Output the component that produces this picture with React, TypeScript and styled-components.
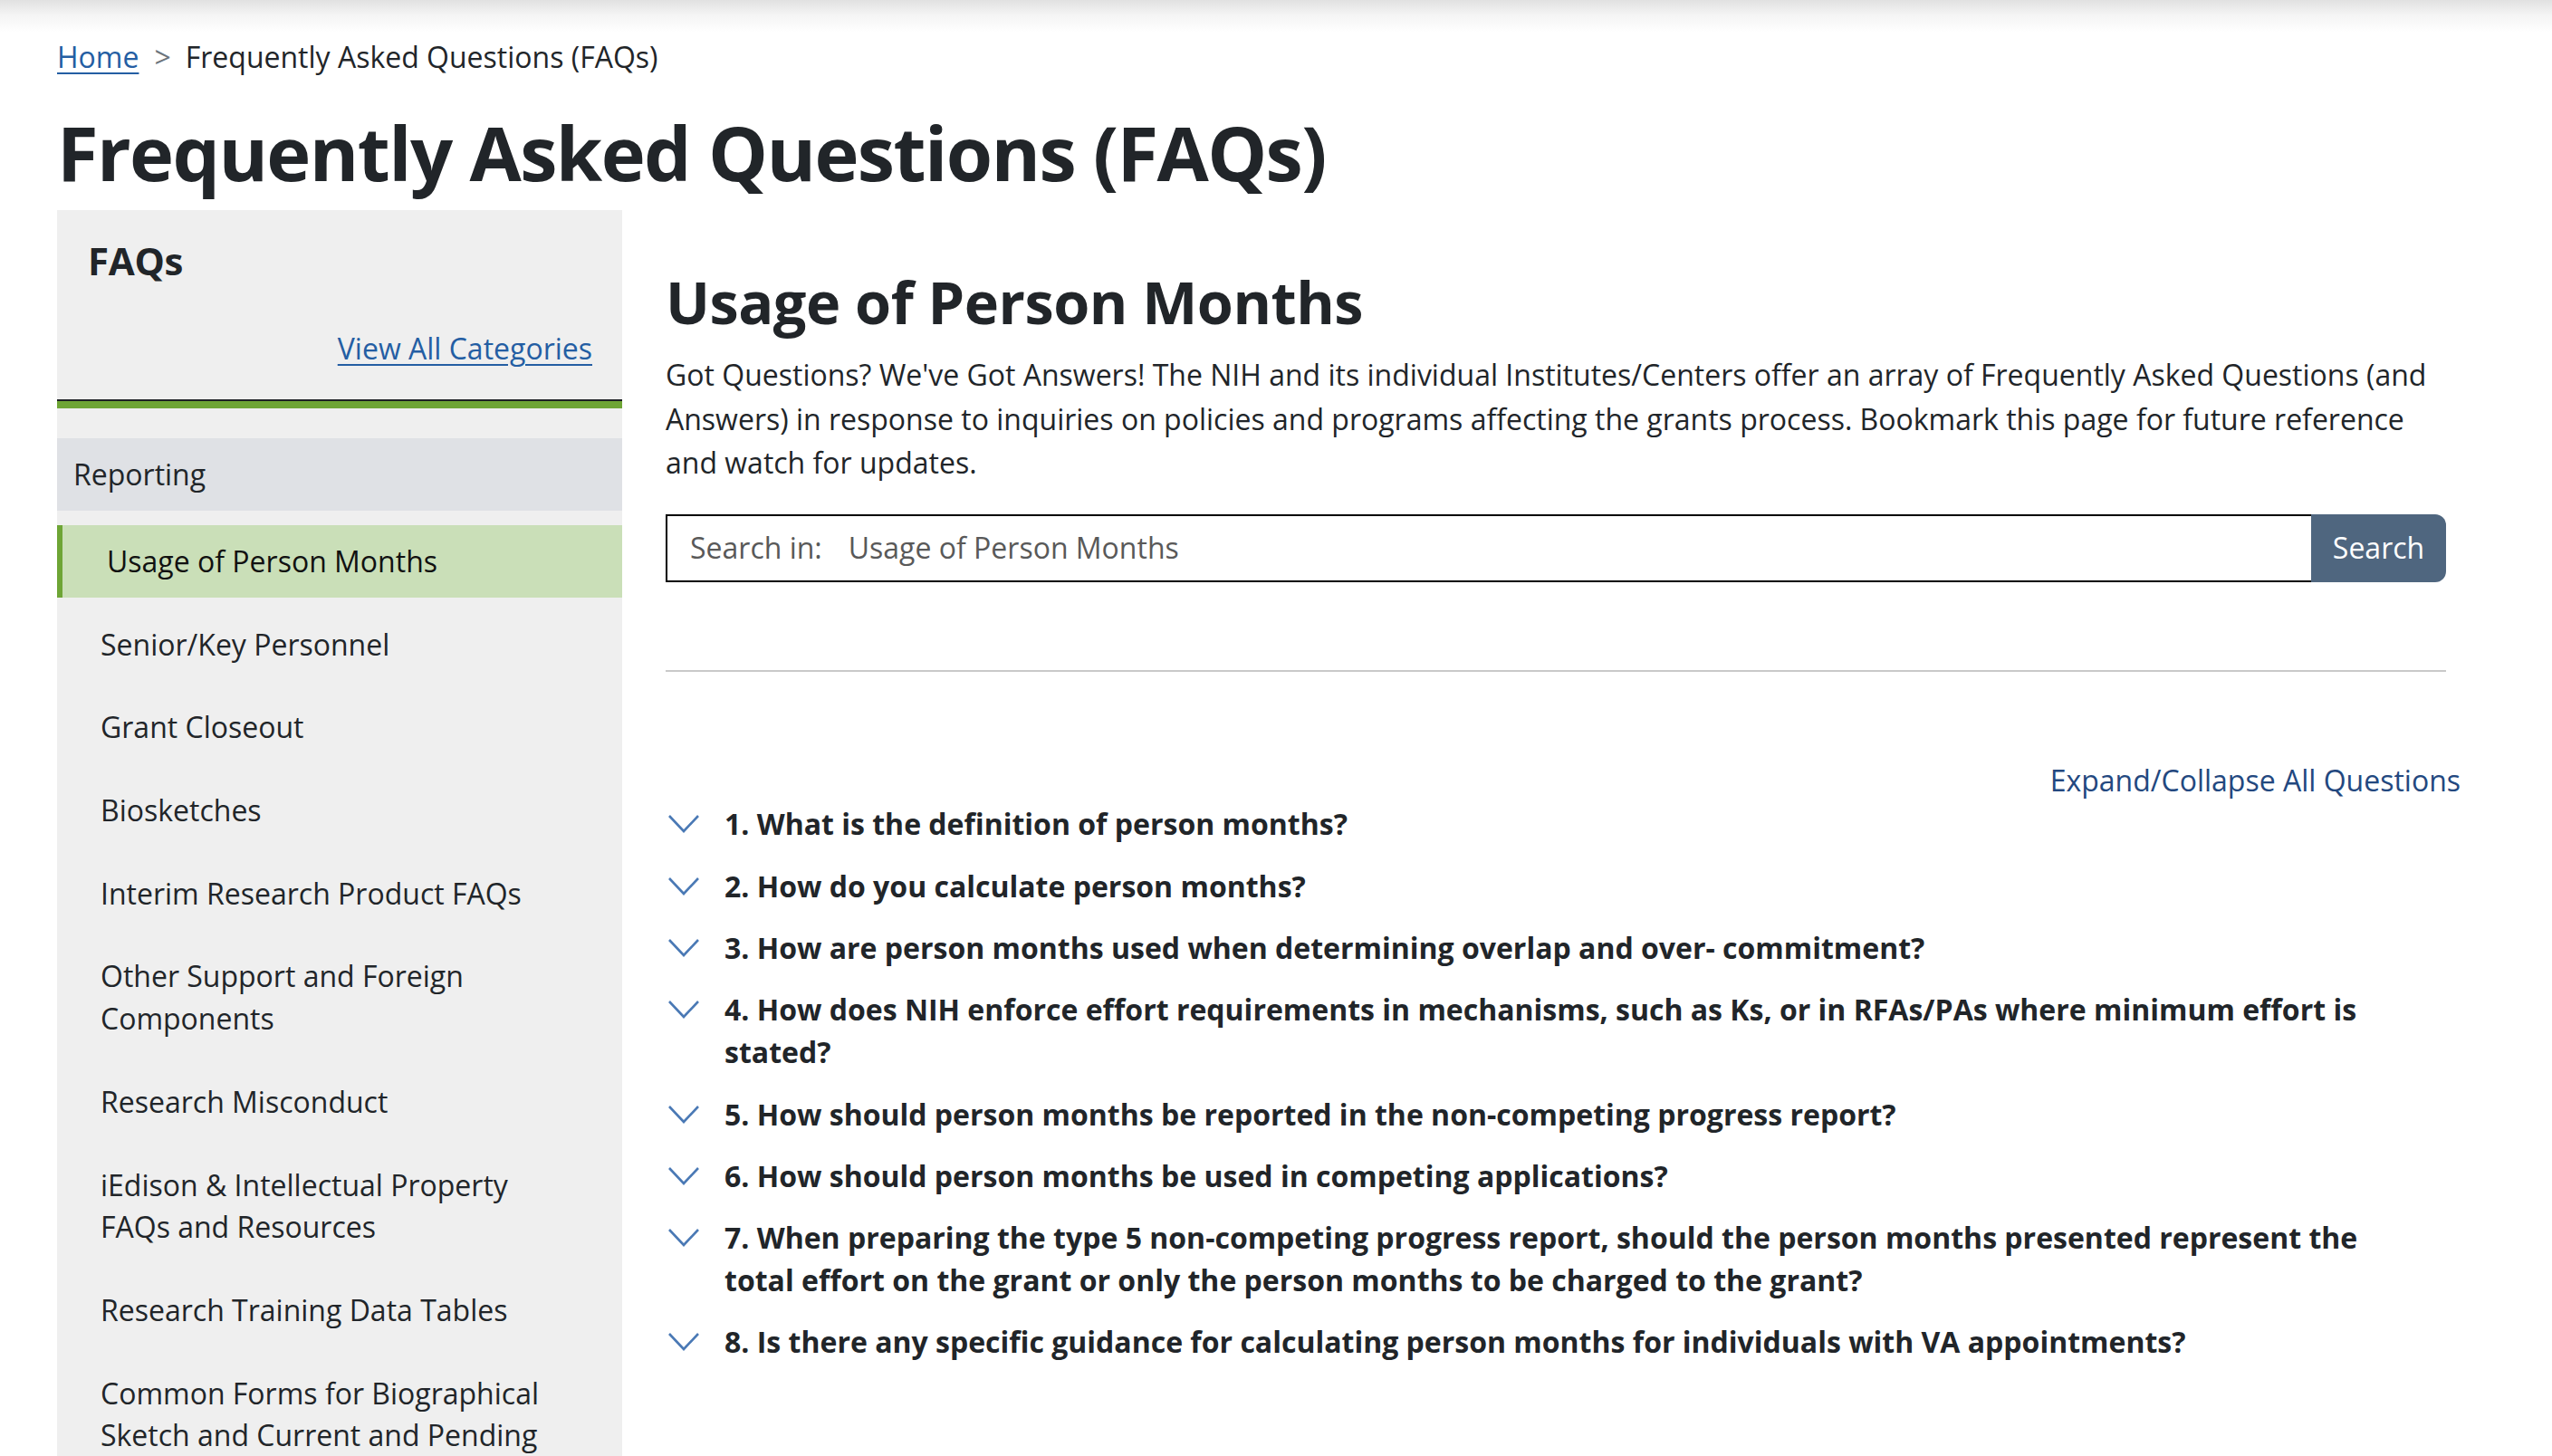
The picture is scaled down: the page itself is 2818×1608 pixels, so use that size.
import React from "react";
import styled, { createGlobalStyle } from "styled-components";

const GlobalStyle = createGlobalStyle`
  html, body {
    margin: 0;
    padding: 0;
    background: #ffffff;
  }
  body {
    font-family: "Open Sans", "Noto Sans", "DejaVu Sans", sans-serif;
    font-size: 32px;
    line-height: 1.5;
    color: #212529;
  }
  * { box-sizing: border-box; }
`;

const TopShade = styled.div`
  height: 36px;
  background: linear-gradient(to bottom, #e1e1e1 0%, #f4f4f4 45%, #ffffff 100%);
`;

const Page = styled.div`
  padding: 3px 0 0 63px;
  width: 2818px;
`;

const Breadcrumb = styled.nav`
  display: flex;
  align-items: baseline;
  line-height: 48.6px;
`;

const Link = styled.a`
  color: #245ea3;
  text-decoration: underline;
  text-decoration-thickness: 2px;
  text-underline-offset: 5px;
  cursor: pointer;
`;

const Sep = styled.span`
  color: #6c757d;
  margin: 0 16px 0 17px;
`;

const Title = styled.h1`
  margin: 30px 0 15px;
  font-size: 83px;
  line-height: 1.2;
  font-weight: 700;
  color: #212529;
  letter-spacing: -1.6px;
`;

const Layout = styled.div`
  display: grid;
  grid-template-columns: 624px 1966px;
  column-gap: 48px;
  align-items: start;
`;

const Sidebar = styled.aside`
  background: #efefef;
  padding-bottom: 40px;
`;

const SideHeader = styled.div`
  padding: 31px 33px 32px 34px;
  border-bottom: 2px solid #1d2125;
  display: flex;
  flex-direction: column;
`;

const SideTitle = styled.h3`
  margin: 0;
  font-size: 42px;
  line-height: 1.2;
  font-weight: 700;
  letter-spacing: -0.3px;
`;

const SideLink = styled(Link)`
  align-self: flex-end;
  margin-top: 47px;
  line-height: 48.6px;
`;

const SideNav = styled.ul`
  list-style: none;
  margin: 0;
  padding: 33px 0 0;
  border-top: 8px solid #6ea535;
`;

const GroupItem = styled.li`
  background: #dfe1e5;
  padding: 15.7px 18px;
  line-height: 48.6px;
  margin-bottom: 16px;
  color: #212529;
`;

const NavItem = styled.li<{ $active?: boolean }>`
  padding: ${(p) => (p.$active ? "16.7px 24px 16.7px 49px" : "22.5px 70px 22.5px 48px")};
  line-height: ${(p) => (p.$active ? "46.6px" : "46.7px")};
  background: ${(p) => (p.$active ? "#cadfb8" : "transparent")};
  border-left: ${(p) => (p.$active ? "6px solid #6ea535" : "none")};
  margin-bottom: ${(p) => (p.$active ? "6px" : "0")};
  color: ${(p) => (p.$active ? "#111" : "#212529")};
`;

const Main = styled.main`
  padding-top: 63px;
`;

const Heading = styled.h2`
  margin: 0 0 17px;
  font-size: 64.8px;
  line-height: 1.2;
  font-weight: 700;
  letter-spacing: -0.5px;
`;

const Intro = styled.p`
  margin: 0 0 32px;
  line-height: 48.6px;
`;

const SearchRow = styled.form`
  display: flex;
  height: 75px;
`;

const SearchField = styled.label`
  flex: 1;
  display: flex;
  align-items: center;
  border: 2px solid #000;
  border-right: none;
  padding-left: 25px;
  color: #595959;
`;

const SearchLabel = styled.span`
  margin-right: 29px;
  white-space: nowrap;
`;

const SearchInput = styled.input`
  flex: 1;
  border: none;
  outline: none;
  background: transparent;
  font: inherit;
  color: #212529;
  padding: 0;
  &::placeholder {
    color: #595959;
    opacity: 1;
  }
`;

const SearchButton = styled.button`
  width: 149px;
  border: none;
  background: #4f667f;
  color: #fff;
  font: inherit;
  border-radius: 0 12px 12px 0;
  padding: 0;
  cursor: pointer;
`;

const Divider = styled.hr`
  margin: 97px 0 0;
  border: none;
  border-top: 2px solid #c9c9c9;
`;

const ExpandRow = styled.div`
  display: flex;
  justify-content: flex-end;
  margin: 96px -16px 0 0;
  line-height: 48.6px;
`;

const ExpandLink = styled.a`
  color: #23487f;
  text-decoration: none;
  cursor: pointer;
`;

const Questions = styled.ol`
  list-style: none;
  margin: 0;
  padding: 0;
`;

const Question = styled.li`
  display: flex;
  align-items: flex-start;
  margin-bottom: 21.3px;
`;

const Chevron = styled.svg`
  flex: none;
  width: 40px;
  height: 47px;
  margin-right: 25px;
`;

const QText = styled.span`
  flex: 1;
  font-weight: 700;
  line-height: 47px;
  color: #212529;
  padding-right: 55px;
`;

const categories: string[] = [
  "Senior/Key Personnel",
  "Grant Closeout",
  "Biosketches",
  "Interim Research Product FAQs",
  "Other Support and Foreign Components",
  "Research Misconduct",
  "iEdison & Intellectual Property FAQs and Resources",
  "Research Training Data Tables",
  "Common Forms for Biographical Sketch and Current and Pending (Other) Support",
];

const questions: string[] = [
  "1. What is the definition of person months?",
  "2. How do you calculate person months?",
  "3. How are person months used when determining overlap and over- commitment?",
  "4. How does NIH enforce effort requirements in mechanisms, such as Ks, or in RFAs/PAs where minimum effort is stated?",
  "5. How should person months be reported in the non-competing progress report?",
  "6. How should person months be used in competing applications?",
  "7. When preparing the type 5 non-competing progress report, should the person months presented represent the total effort on the grant or only the person months to be charged to the grant?",
  "8. Is there any specific guidance for calculating person months for individuals with VA appointments?",
];

const ChevronIcon = () => (
  <Chevron viewBox="0 0 40 47" aria-hidden="true">
    <polyline
      points="4,15 20,32 36,15"
      fill="none"
      stroke="#4a79b5"
      strokeWidth="2.6"
    />
  </Chevron>
);

export default function App() {
  return (
    <>
      <GlobalStyle />
      <TopShade />
      <Page>
        <Breadcrumb>
          <Link>Home</Link>
          <Sep>&gt;</Sep>
          <span>Frequently Asked Questions (FAQs)</span>
        </Breadcrumb>
        <Title>Frequently Asked Questions (FAQs)</Title>
        <Layout>
          <Sidebar>
            <SideHeader>
              <SideTitle>FAQs</SideTitle>
              <SideLink>View All Categories</SideLink>
            </SideHeader>
            <SideNav>
              <GroupItem>Reporting</GroupItem>
              <NavItem $active>Usage of Person Months</NavItem>
              {categories.map((c) => (
                <NavItem key={c}>{c}</NavItem>
              ))}
            </SideNav>
          </Sidebar>
          <Main>
            <Heading>Usage of Person Months</Heading>
            <Intro>
              Got Questions? We've Got Answers! The NIH and its individual
              Institutes/Centers offer an array of Frequently Asked Questions
              (and Answers) in response to inquiries on policies and programs
              affecting the grants process. Bookmark this page for future
              reference and watch for updates.
            </Intro>
            <SearchRow onSubmit={(e) => e.preventDefault()}>
              <SearchField>
                <SearchLabel>Search in:</SearchLabel>
                <SearchInput placeholder="Usage of Person Months" />
              </SearchField>
              <SearchButton type="submit">Search</SearchButton>
            </SearchRow>
            <Divider />
            <ExpandRow>
              <ExpandLink>Expand/Collapse All Questions</ExpandLink>
            </ExpandRow>
            <Questions>
              {questions.map((q) => (
                <Question key={q}>
                  <ChevronIcon />
                  <QText>{q}</QText>
                </Question>
              ))}
            </Questions>
          </Main>
        </Layout>
      </Page>
    </>
  );
}
